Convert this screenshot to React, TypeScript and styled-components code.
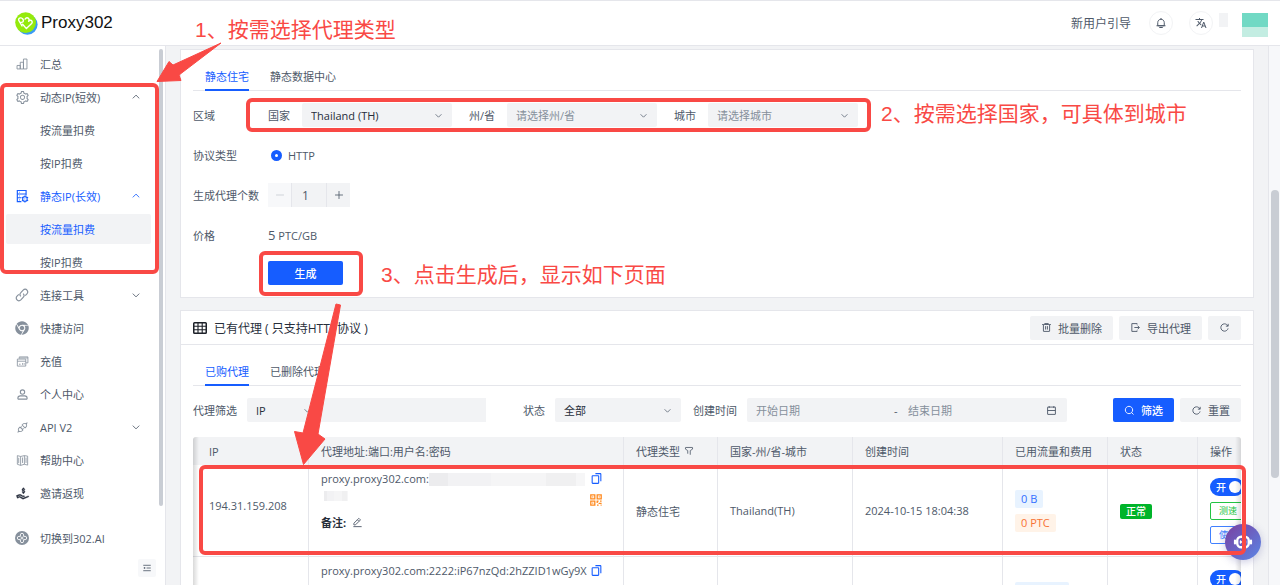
import React from "react";
import styled, { createGlobalStyle, css } from "styled-components";
import { AiOutlineApi, AiOutlineSetting } from "react-icons/ai";
import { FaChrome } from "react-icons/fa";
import { MdTranslate } from "react-icons/md";
import { LiaHandHoldingUsdSolid } from "react-icons/lia";

const blue = "#165dff";
const red = "#f94945";
const fill = "#f2f3f5";
const line = "#e5e6eb";

const GlobalStyle = createGlobalStyle`
  *, *::before, *::after { box-sizing: border-box; }
  body { margin: 0; background: ${fill}; }
  body, button, input, select {
    font-family: "Open Sans", "Noto Sans CJK SC", sans-serif;
    font-size: 11px;
    color: #4e5969;
  }
  button, input, select { margin: 0; border: 0; outline: 0; }
  svg { display: block; flex: none; }
`;

/* ---------- icons ---------- */

const paths = {
  up: "M39.6 30.557 24.043 15 8.487 30.557",
  down: "M39.6 17.443 24.043 33 8.487 17.443",
  trash:
    "M5 11h5.5m0 0v29a1 1 0 0 0 1 1h25a1 1 0 0 0 1-1V11m-27 0H16m21.5 0H43m-5.5 0H32m-16 0V7h16v4m-16 0h16M20 18v15m8-15v15",
  exportIcon: "M33 32l8-8-8-8M19 24h21M31 11V7H8v34h23v-4",
  refresh:
    "M38.837 18C36.463 12.136 30.715 8 24 8 15.163 8 8 15.163 8 24s7.163 16 16 16c7.455 0 13.72-5.1 15.496-12M40 8v10H30",
  search:
    "M33.072 33.071c6.248-6.248 6.248-16.379 0-22.627-6.249-6.249-16.38-6.249-22.628 0-6.248 6.248-6.248 16.379 0 22.627 6.248 6.248 16.38 6.248 22.628 0Zm0 0 8.485 8.485",
  calendar:
    "M7 24h34M14 5v8m20-8v8M8 41h32a1 1 0 0 0 1-1V10a1 1 0 0 0-1-1H8a1 1 0 0 0-1 1v30a1 1 0 0 0 1 1Z",
  copy: "M20 6h18a2 2 0 0 1 2 2v26M8 16v24c0 1.105.891 2 1.996 2h20.007A1.99 1.99 0 0 0 32 40.008V15.997A1.997 1.997 0 0 0 30 14H10a2 2 0 0 0-2 2Z",
  filter:
    "M30 42V22.549a1 1 0 0 1 .463-.844l10.074-6.41A1 1 0 0 0 41 14.45V8a1 1 0 0 0-1-1H8a1 1 0 0 0-1 1v6.451a1 1 0 0 0 .463.844l10.074 6.41a1 1 0 0 1 .463.844V37",
  edit: "m30.48 19.038 5.733-5.734a1 1 0 0 0 0-1.414l-5.586-5.586a1 1 0 0 0-1.414 0l-5.734 5.734m7 7L15.763 33.754a1 1 0 0 1-.59.286l-6.048.708a1 1 0 0 1-1.113-1.069l.477-6.31a1 1 0 0 1 .29-.631l14.7-14.7m7 7-7-7M6 42h36",
  bell: "M24 9c7.18 0 13 5.82 13 13v13H11V22c0-7.18 5.82-13 13-13Zm0 0V4M6 35h36m-25 7h14",
  user: "M7 37c0-4.97 4.03-8 9-8h16c4.97 0 9 3.03 9 8v3a1 1 0 0 1-1 1H8a1 1 0 0 1-1-1v-3ZM32 15a8 8 0 1 1-16 0 8 8 0 0 1 16 0Z",
  fold: "M42 11H6M42 24H22M42 37H6M13.66 26.912l-4.82-3.118 4.82-3.118v6.236Z",
  bars: "M41 7H29v34h12V7ZM29 18H18v23h11V18ZM18 29H7v12h11V29Z",
  link: "M20 29c-4-4-4-9 0-13l8-9c4-4 10-4 13 0s4 9 0 13l-6 6M28 19c4 4 4 9 0 13l-8 9c-4 4-10 4-13 0s-4-9 0-13l6-6",
  plus: "M5 24h38M24 5v38",
  minus: "M5 24h38",
  book: "M17 9 5 6v32l12 4 14-4 12 3V8L31 6 17 9Zm0 0v33M31 6v32M10 14v20M24 13v20M37 13v20",
  cards:
    "M12 14V7h32v22h-7M5 15h31v26H5V15Zm0 8h31M11 34h6M24 30v6M30 30v6M14 11h30",
  serverGear:
    "M22 43H8V5h30v17M8 17h30M8 30h14M14 11h2M14 24h2M14 37h2M42 34a8 8 0 1 1-16 0 8 8 0 0 1 16 0ZM34 22v4M34 42v4M24 28l3 2M41 38l4 2M24 40l3-2M41 30l4-2M33 34h2",
};

type IconName = keyof typeof paths;

const Icon = ({ name, size = 11, weight = 4 }: { name: IconName; size?: number; weight?: number }) => (
  <svg width={size} height={size} viewBox="0 0 48 48" fill="none" stroke="currentColor" strokeWidth={weight} aria-hidden>
    <path d={paths[name]} />
  </svg>
);

const TableIcon = () => (
  <svg width="14" height="12" viewBox="0 0 14 12" fill="none" stroke="#1d2129" aria-hidden>
    <rect x="0.75" y="0.75" width="12.5" height="10.5" rx="0.8" strokeWidth="1.5" />
    <path d="M1 4.3h12M1 7.7h12M5 1v10M9.2 1v10" strokeWidth="1.1" />
  </svg>
);

const QrIcon = () => (
  <svg width="12" height="12" viewBox="0 0 12 12" fill="none" stroke="#ff8a1f" strokeWidth="1.3" aria-hidden>
    <path d="M.8.8h4v4h-4zM7.2.8h4v4h-4zM.8 7.2h4v4h-4z" />
    <path d="M2.3 2.8h1M8.7 2.8h1M2.3 9.2h1M6.6 7.2h2M10 7.2h1.6M7.2 7v2M8.6 9.4h3M7 11.2h1.6M10.6 11.2h1" />
  </svg>
);

const CloverIcon = () => (
  <svg width="14" height="14" viewBox="0 0 14 14" aria-hidden>
    <circle cx="7" cy="7" r="7" fill="#86909c" />
    <path
      d="M5.4 5.4V3.9a1.6 1.6 0 0 1 3.2 0v1.5h1.5a1.6 1.6 0 0 1 0 3.2H8.6v1.5a1.6 1.6 0 0 1-3.2 0V8.6H3.9a1.6 1.6 0 0 1 0-3.2ZM7 5.6v2.8M5.6 7h2.8"
      fill="none"
      stroke="#fff"
      strokeWidth=".9"
    />
  </svg>
);

const Logo = () => (
  <svg width="23" height="23" viewBox="0 0 23 23" fill="none" aria-hidden>
    <circle cx="12.4" cy="12.6" r="10.2" fill="#3a9bf5" />
    <circle cx="10.6" cy="10.6" r="10.4" fill="#94ea0c" />
    <path
      d="M7 14 3.800 8.400C3.200 7 4.300 5.700 5.900 5.900c1.500.2 2.700 1.600 2.500 3-.1.900-1 1.600-2.400 1.500M7.600 12.200 11.400 16.600 16.600 11.500c1.200-1.300.4-3-.9-3.200-.9-.1-1.600.3-2.100.9.900-1.300.5-2.700-.7-3.200-1.100-.4-2.200.1-2.800 1.100"
      stroke="#fff"
      strokeWidth="1.400"
      strokeLinecap="round"
      strokeLinejoin="round"
    />
  </svg>
);

const RobotIcon = () => (
  <svg width="20" height="20" viewBox="0 0 20 20" fill="none" stroke="#fff" aria-hidden>
    <rect x="4.200" y="4.700" width="11.600" height="10.600" rx="4" strokeWidth="2.400" />
    <path d="M2 8.500v3M18 8.500v3" strokeWidth="2.200" strokeLinecap="round" />
    <path d="M7.500 9v2M12.500 9v2M7.500 10h5" strokeWidth="1.400" strokeLinecap="round" />
  </svg>
);

/* ---------- shell ---------- */

const Page = styled.div`
  position: relative;
  display: flex;
  flex-direction: column;
  height: 100vh;
  overflow: hidden;
`;

const Header = styled.header`
  display: flex;
  align-items: center;
  justify-content: space-between;
  flex: none;
  height: 46px;
  padding: 0 12px 0 15px;
  background: #fff;
  border-top: 1px solid ${line};
  border-bottom: 1px solid ${line};
`;

const Brand = styled.a`
  display: flex;
  align-items: center;
  gap: 3px;
  font-family: "Liberation Sans", sans-serif;
  font-size: 17px;
  color: #111;
  text-decoration: none;
`;

const HeaderTools = styled.div`
  display: flex;
  align-items: center;
  gap: 16px;
`;

const GuideLink = styled.a`
  margin-right: 2px;
  font-size: 12px;
  color: #4e5969;
  text-decoration: none;
`;

const RoundButton = styled.button`
  display: grid;
  place-items: center;
  width: 24px;
  height: 24px;
  padding: 0;
  border: 1px solid ${fill};
  border-radius: 50%;
  background: #fff;
`;

const Account = styled.div`
  display: flex;
  align-items: flex-start;
  gap: 14px;
  margin-top: 4px;
  margin-left: -10px;
`;

const NameBlur = styled.span`
  width: 9px;
  height: 14px;
  background: ${fill};
`;

const Avatar = styled.span`
  width: 26px;
  height: 24px;
  background: linear-gradient(#71d9c4 0 14px, #c3ede2 14px);
`;

const Body = styled.div`
  display: flex;
  flex: 1;
  min-height: 0;
`;

const Sidebar = styled.aside`
  display: flex;
  flex: none;
  width: 166px;
  background: #fff;
  border-right: 1px solid ${line};
`;

const SideColumn = styled.div`
  display: flex;
  flex-direction: column;
  flex: 1;
  padding: 3px 3px 8px 6px;
`;

const Nav = styled.nav`
  display: flex;
  flex-direction: column;
  gap: 3px;
  margin-right: 5px;
`;

const NavLink = styled.a<{ $active?: boolean; $open?: boolean }>`
  display: grid;
  grid-template-columns: 14px 1fr 10px;
  column-gap: 11px;
  align-items: center;
  height: 30px;
  padding: 0 10px 0 9px;
  border-radius: 2px;
  color: ${(p) => (p.$active || p.$open ? blue : "#4e5969")};
  background: ${(p) => (p.$active ? fill : "transparent")};
  text-decoration: none;
  white-space: nowrap;
`;

const NavIcon = styled.span<{ $dark?: boolean; $active?: boolean }>`
  display: grid;
  place-items: center;
  color: ${(p) => (p.$active ? blue : p.$dark ? "#272e3b" : "#86909c")};
`;

const SwitchSite = styled.div`
  margin-top: 15px;
`;

const FoldButton = styled.button`
  display: grid;
  place-items: center;
  width: 18px;
  height: 18px;
  margin-top: auto;
  margin-left: auto;
  padding: 0;
  border-radius: 2px;
  background: #f7f8fa;
`;

const SideScroll = styled.div`
  width: 4px;
  height: 457px;
  margin: 3px 2px 0 0;
  border-radius: 2px;
  background: #c9cdd4;
`;

const Main = styled.main`
  display: flex;
  flex-direction: column;
  flex: 1;
  gap: 12px;
  min-width: 0;
  padding: 3px 14px 0;
  overflow: hidden;
`;

const PageScroll = styled.div`
  flex: none;
  width: 12px;
  padding: 144px 0 0 2px;
  border-left: 1px solid ${line};
  background: #f7f8fa;
`;

const PageThumb = styled.div`
  width: 8px;
  height: 288px;
  border-radius: 4px;
  background: #c9cdd4;
`;

/* ---------- cards ---------- */

const Card = styled.section`
  flex: none;
  padding: 0 12px;
  background: #fff;
  border: 1px solid ${line};
  &:first-child { padding-bottom: 12px; }
`;

const Tabs = styled.div`
  display: flex;
  gap: 21px;
  height: 41px;
  padding: 12px 12px 0;
  border-bottom: 1px solid ${line};
`;

const Tab = styled.button<{ $active?: boolean }>`
  height: 29px;
  padding: 0;
  background: none;
  color: ${(p) => (p.$active ? blue : "#4e5969")};
  border-bottom: 2px solid ${(p) => (p.$active ? blue : "transparent")};
`;

const FormRow = styled.div`
  display: flex;
  align-items: center;
  height: 24px;
  margin-top: 16px;
  &:first-of-type { margin-top: 12px; }
  &:last-of-type { margin-top: 14px; }
`;

const FormLabel = styled.label`
  flex: none;
  width: 75px;
  white-space: nowrap;
`;

const Form = styled.form`
  margin: 0;
`;

const InlineLabel = styled.label<{ $first?: boolean }>`
  padding: 0 12px 0 ${(p) => (p.$first ? 0 : 17)}px;
  white-space: nowrap;
`;

const SelectBox = styled.div<{ $width: number; $muted?: boolean }>`
  display: grid;
  grid-template-columns: 1fr 28px;
  align-items: center;
  flex: none;
  width: ${(p) => p.$width}px;
  height: 24px;
  border-radius: 2px;
  background: ${fill};
  color: #4e5969;
  select {
    grid-area: 1 / 1 / 2 / 3;
    height: 24px;
    padding: 0 24px 0 9px;
    appearance: none;
    background: transparent;
    color: ${(p) => (p.$muted ? "#86909c" : "#272e3b")};
  }
  svg { grid-area: 1 / 2; justify-self: center; pointer-events: none; }
`;

const Radio = styled.input`
  appearance: none;
  width: 11px;
  height: 11px;
  margin: 0 6px 0 3px;
  border: 4px solid ${blue};
  border-radius: 50%;
  background: #fff;
`;

const Stepper = styled.div`
  display: flex;
  gap: 1px;
  background: ${line};
`;

const StepButton = styled.button`
  display: grid;
  place-items: center;
  width: 23px;
  height: 24px;
  padding: 0;
  background: ${fill};
  &:disabled { background: #f7f8fa; color: #c9cdd4; }
`;

const StepInput = styled.input`
  width: 34px;
  height: 24px;
  padding: 0 0 0 10px;
  background: ${fill};
  font-size: 12px;
`;

const Price = styled.output`
  b { font-size: 13px; font-weight: 400; }
`;

const Button = styled.button<{ $primary?: boolean; $wide?: boolean }>`
  display: inline-flex;
  align-items: center;
  justify-content: center;
  gap: 6px;
  flex: none;
  height: 24px;
  padding: 0 11px;
  border-radius: 2px;
  white-space: nowrap;
  background: ${(p) => (p.$primary ? blue : fill)};
  ${(p) => p.$primary && css`color: #fff; font-weight: 500;`}
  ${(p) => p.$wide && css`width: 75px;`}
`;

const CardHead = styled.div`
  display: flex;
  align-items: center;
  gap: 6px;
  height: 34px;
  margin: 0 -12px;
  padding: 0 12px;
  border-bottom: 1px solid ${line};
`;

const CardTitle = styled.h2`
  display: flex;
  align-items: center;
  gap: 7px;
  margin: 0 auto 0 0;
  font-size: 12px;
  font-weight: 400;
  color: #272e3b;
`;

const Filters = styled.form`
  display: flex;
  align-items: center;
  margin: 12px 0 15px;
  white-space: nowrap;
`;

const FilterLabel = styled.label<{ $lead?: boolean }>`
  margin: 0 10px 0 ${(p) => (p.$lead ? 37 : 12)}px;
  &:first-child { margin-left: 0; }
`;

const Keyword = styled.input`
  width: 165px;
  height: 24px;
  background: ${fill};
`;

const DateRange = styled.div`
  display: grid;
  grid-template-columns: 1fr 14px 1fr 12px;
  align-items: center;
  width: 320px;
  height: 24px;
  padding: 0 9px;
  border-radius: 2px;
  background: ${fill};
  input { min-width: 0; padding: 0; background: none; }
  input::placeholder { color: #86909c; }
`;

const FilterActions = styled.div`
  display: flex;
  gap: 6px;
  margin-left: auto;
`;

/* ---------- table ---------- */

const TableFrame = styled.div`
  position: relative;
  overflow: hidden;
  border-radius: 3px 3px 0 0;
  &::before, &::after {
    content: "";
    position: absolute;
    top: 0;
    bottom: 0;
    width: 6px;
    pointer-events: none;
  }
  &::before { left: 0; background: linear-gradient(90deg, rgba(0, 0, 0, 0.15), transparent); }
  &::after { right: 0; background: linear-gradient(270deg, rgba(0, 0, 0, 0.12), transparent); }
`;

const DataTable = styled.table`
  width: calc(100% + 56px);
  table-layout: fixed;
  border-collapse: separate;
  border-spacing: 0;
  color: #4e5969;
  th, td {
    padding: 0 12px;
    border-right: 1px solid ${line};
    text-align: left;
    white-space: nowrap;
  }
  th { height: 28px; font-weight: 400; background: ${fill}; color: #4e5969; }
  td { height: 92px; border-bottom: 1px solid ${line}; color: #4e5969; }
  th:first-child, td:first-child { padding-left: 16px; }
`;

const IpCell = styled.td`
  && { padding-bottom: 10px; }
`;

const AddressCell = styled.td`
  vertical-align: top;
`;

const Address = styled.div`
  display: grid;
  grid-template-columns: 267px 16px;
  column-gap: 2px;
  padding-top: 6px;
  line-height: 16px;
`;

const AddressText = styled.div`
  display: flex;
  flex-wrap: wrap;
`;

const Mosaic = styled.span<{ $width: number }>`
  width: ${(p) => p.$width}px;
  height: ${(p) => (p.$width > 50 ? 13 : 10)}px;
  margin: 2px 0 ${(p) => (p.$width > 50 ? 1 : 4)}px ${(p) => (p.$width > 50 ? 0 : 3)}px;
  background: linear-gradient(90deg, #ececee 0 12%, #f2f2f4 12% 40%, #f5f5f6 40% 75%, #f0f0f1 75% 94%, #f6f6f7 94%);
`;

const AddressTools = styled.div`
  display: flex;
  flex-direction: column;
  align-items: flex-start;
  gap: 9px;
  padding-top: 1px;
  color: ${blue};
`;

const IconButton = styled.button`
  padding: 0;
  background: none;
  color: inherit;
`;

const Remark = styled.div`
  display: flex;
  align-items: center;
  gap: 6px;
  margin-top: 8px;
  strong { font-weight: 700; color: #272e3b; }
`;

const HeadFlex = styled.span`
  display: flex;
  align-items: center;
  gap: 4px;
`;

const TagStack = styled.div`
  display: flex;
  flex-direction: column;
  align-items: flex-start;
  gap: 6px;
`;

const Tag = styled.span<{ $orange?: boolean }>`
  padding: 0 6px;
  border-radius: 2px;
  line-height: 18px;
  color: ${(p) => (p.$orange ? "#f77234" : "#3370ff")};
  background: ${(p) => (p.$orange ? "#fff3e8" : "#e8f3ff")};
`;

const StatusTag = styled.span`
  display: inline-block;
  padding: 0 6px;
  border-radius: 2px;
  background: #00b42a;
  color: #fff;
  font-size: 10px;
  font-weight: 500;
  line-height: 15px;
`;

const Ops = styled.div`
  display: flex;
  flex-direction: column;
  gap: 6px;
`;

const Toggle = styled.button`
  display: flex;
  align-items: center;
  justify-content: space-between;
  width: 34px;
  height: 18px;
  padding: 0 3px 0 6px;
  border-radius: 9px;
  background: ${blue};
  color: #fff;
  font-size: 10px;
  font-weight: 500;
  &::after { content: ""; width: 12px; height: 12px; border-radius: 50%; background: #fff; }
`;

const OutlineButton = styled.button<{ $color: string }>`
  width: 44px;
  height: 18px;
  padding: 0 8px;
  text-align: left;
  font-size: 9px;
  border: 1px solid ${(p) => p.$color};
  border-radius: 2px;
  background: #fff;
  color: ${(p) => p.$color};
`;

const ChatButton = styled.button`
  position: absolute;
  right: 19px;
  bottom: 25px;
  display: grid;
  place-items: center;
  width: 36px;
  height: 36px;
  padding: 0;
  border-radius: 50%;
  background: linear-gradient(135deg, #7a3fa0, #5a86e6);
  box-shadow: 0 2px 8px rgba(80, 80, 160, 0.3);
`;

/* ---------- tutorial marks over the page ---------- */

const Marks = styled.div`
  position: absolute;
  inset: 0;
  pointer-events: none;
`;

const MarkBox = styled.div<{ $x: number; $y: number; $w: number; $h: number }>`
  position: absolute;
  left: ${(p) => p.$x}px;
  top: ${(p) => p.$y}px;
  width: ${(p) => p.$w}px;
  height: ${(p) => p.$h}px;
  border: 4px solid ${red};
  border-radius: 6px;
`;

const MarkText = styled.p<{ $x: number; $y: number }>`
  position: absolute;
  left: ${(p) => p.$x}px;
  top: ${(p) => p.$y}px;
  margin: 0;
  font-family: "Liberation Sans", "Noto Sans CJK SC", sans-serif;
  font-size: 21px;
  line-height: 30px;
  white-space: nowrap;
  color: ${red};
`;

const Arrows = styled.svg`
  position: absolute;
  left: 0;
  top: 0;
`;

/* ---------- data ---------- */

type NavItem = {
  label: string;
  icon?: React.ReactNode;
  arrow?: "up" | "down";
  active?: boolean;
  open?: boolean;
  dark?: boolean;
};

const navItems: NavItem[] = [
  { label: "汇总", icon: <Icon name="bars" size={14} weight={3} /> },
  { label: "动态IP(短效)", icon: <AiOutlineSetting size={15} />, arrow: "up" },
  { label: "按流量扣费" },
  { label: "按IP扣费" },
  { label: "静态IP(长效)", icon: <Icon name="serverGear" size={14} />, arrow: "up", open: true },
  { label: "按流量扣费", active: true },
  { label: "按IP扣费" },
  { label: "连接工具", icon: <Icon name="link" size={14} /> , arrow: "down" },
  { label: "快捷访问", icon: <FaChrome size={14} /> },
  { label: "充值", icon: <Icon name="cards" size={13} weight={3} /> },
  { label: "个人中心", icon: <Icon name="user" size={13} /> },
  { label: "API V2", icon: <AiOutlineApi size={13} />, arrow: "down" },
  { label: "帮助中心", icon: <Icon name="book" size={13} weight={3} /> },
  {
    label: "邀请返现",
    icon: <LiaHandHoldingUsdSolid size={15} stroke="currentColor" strokeWidth={1} />,
    dark: true,
  },
];

const NavEntry = ({ item }: { item: NavItem }) => (
  <NavLink href="#" $active={item.active} $open={item.open}>
    <NavIcon $dark={item.dark} $active={item.open}>{item.icon}</NavIcon>
    <span>{item.label}</span>
    {item.arrow && <Icon name={item.arrow} size={10} />}
  </NavLink>
);

type SelectProps = { id: string; text: string; width: number; muted?: boolean };

const Select = ({ id, text, width, muted }: SelectProps) => (
  <SelectBox $width={width} $muted={muted}>
    <select id={id}>
      <option>{text}</option>
    </select>
    <Icon name="down" size={9} />
  </SelectBox>
);

const Operations = () => (
  <Ops>
    <Toggle type="button" role="switch" aria-checked="true">开</Toggle>
    <OutlineButton type="button" $color="#23c343">测速</OutlineButton>
    <OutlineButton type="button" $color="#4080ff">使用</OutlineButton>
  </Ops>
);

const CopyTools = () => (
  <AddressTools>
    <IconButton type="button" aria-label="复制"><Icon name="copy" size={13} /></IconButton>
    <IconButton type="button" aria-label="二维码"><QrIcon /></IconButton>
  </AddressTools>
);

export default function App() {
  return (
    <Page>
      <GlobalStyle />
      <Header>
        <Brand href="#"><Logo />Proxy302</Brand>
        <HeaderTools>
          <GuideLink href="#">新用户引导</GuideLink>
          <RoundButton type="button" aria-label="通知"><Icon name="bell" size={12} /></RoundButton>
          <RoundButton type="button" aria-label="语言"><MdTranslate size={12} /></RoundButton>
          <Account><NameBlur /><Avatar /></Account>
        </HeaderTools>
      </Header>
      <Body>
        <Sidebar>
          <SideColumn>
            <Nav>{navItems.map((item, i) => <NavEntry key={i} item={item} />)}</Nav>
            <SwitchSite><NavEntry item={{ label: "切换到302.AI", icon: <CloverIcon /> }} /></SwitchSite>
            <FoldButton type="button" aria-label="收起"><Icon name="fold" size={10} /></FoldButton>
          </SideColumn>
          <SideScroll />
        </Sidebar>
        <Main>
          <Card>
            <Tabs>
              <Tab type="button" $active>静态住宅</Tab>
              <Tab type="button">静态数据中心</Tab>
            </Tabs>
            <Form>
              <FormRow>
                <FormLabel as="span">区域</FormLabel>
                <InlineLabel htmlFor="country" $first>国家</InlineLabel>
                <Select id="country" text="Thailand (TH)" width={150} />
                <InlineLabel htmlFor="state">州/省</InlineLabel>
                <Select id="state" text="请选择州/省" width={150} muted />
                <InlineLabel htmlFor="city">城市</InlineLabel>
                <Select id="city" text="请选择城市" width={150} muted />
              </FormRow>
              <FormRow>
                <FormLabel as="span">协议类型</FormLabel>
                <Radio id="http" type="radio" name="protocol" defaultChecked />
                <label htmlFor="http">HTTP</label>
              </FormRow>
              <FormRow>
                <FormLabel htmlFor="count">生成代理个数</FormLabel>
                <Stepper>
                  <StepButton type="button" disabled aria-label="减少"><Icon name="minus" size={10} /></StepButton>
                  <StepInput id="count" defaultValue="1" />
                  <StepButton type="button" aria-label="增加"><Icon name="plus" size={10} /></StepButton>
                </Stepper>
              </FormRow>
              <FormRow>
                <FormLabel htmlFor="price">价格</FormLabel>
                <Price id="price"><b>5</b> PTC/GB</Price>
              </FormRow>
              <FormRow>
                <FormLabel as="span" />
                <Button type="button" $primary $wide>生成</Button>
              </FormRow>
            </Form>
          </Card>
          <Card>
            <CardHead>
              <CardTitle><TableIcon />已有代理 ( 只支持HTTP协议 )</CardTitle>
              <Button type="button"><Icon name="trash" />批量删除</Button>
              <Button type="button"><Icon name="exportIcon" />导出代理</Button>
              <Button type="button" aria-label="刷新"><Icon name="refresh" /></Button>
            </CardHead>
            <Tabs>
              <Tab type="button" $active>已购代理</Tab>
              <Tab type="button">已删除代理</Tab>
            </Tabs>
            <Filters>
              <FilterLabel htmlFor="field">代理筛选</FilterLabel>
              <Select id="field" text="IP" width={74} />
              <Keyword aria-label="关键字" />
              <FilterLabel htmlFor="status" $lead>状态</FilterLabel>
              <Select id="status" text="全部" width={126} />
              <FilterLabel htmlFor="from">创建时间</FilterLabel>
              <DateRange>
                <input id="from" placeholder="开始日期" />
                <span>-</span>
                <input aria-label="结束日期" placeholder="结束日期" />
                <Icon name="calendar" />
              </DateRange>
              <FilterActions>
                <Button type="button" $primary><Icon name="search" />筛选</Button>
                <Button type="button"><Icon name="refresh" />重置</Button>
              </FilterActions>
            </Filters>
            <TableFrame>
              <DataTable>
                <colgroup>
                  <col width="116" />
                  <col width="315" />
                  <col width="94" />
                  <col width="135" />
                  <col width="150" />
                  <col width="105" />
                  <col width="90" />
                  <col />
                </colgroup>
                <thead>
                  <tr>
                    <th>IP</th>
                    <th>代理地址:端口:用户名:密码</th>
                    <th><HeadFlex>代理类型 <Icon name="filter" size={10} /></HeadFlex></th>
                    <th>国家-州/省-城市</th>
                    <th>创建时间</th>
                    <th>已用流量和费用</th>
                    <th>状态</th>
                    <th>操作</th>
                  </tr>
                </thead>
                <tbody>
                  <tr>
                    <IpCell>194.31.159.208</IpCell>
                    <AddressCell>
                      <Address>
                        <AddressText>
                          proxy.proxy302.com:<Mosaic $width={156} />
                          <Mosaic $width={24} />
                        </AddressText>
                        <CopyTools />
                      </Address>
                      <Remark>
                        <strong>备注:</strong>
                        <IconButton type="button" aria-label="编辑"><Icon name="edit" /></IconButton>
                      </Remark>
                    </AddressCell>
                    <td>静态住宅</td>
                    <td>Thailand(TH)</td>
                    <td>2024-10-15 18:04:38</td>
                    <td><TagStack><Tag>0 B</Tag><Tag $orange>0 PTC</Tag></TagStack></td>
                    <td><StatusTag>正常</StatusTag></td>
                    <td><Operations /></td>
                  </tr>
                  <tr>
                    <td />
                    <AddressCell>
                      <Address>
                        <AddressText>
                          <span>proxy.proxy302.com:2222:iP67nzQd:2hZZID1wGy9X</span>
                          <span>HUZ5</span>
                        </AddressText>
                        <CopyTools />
                      </Address>
                    </AddressCell>
                    <td />
                    <td />
                    <td />
                    <td><TagStack><Tag>1.21 MB</Tag><Tag $orange>0 PTC</Tag></TagStack></td>
                    <td />
                    <td><Operations /></td>
                  </tr>
                </tbody>
              </DataTable>
            </TableFrame>
          </Card>
        </Main>
        <PageScroll><PageThumb /></PageScroll>
      </Body>
      <ChatButton type="button" aria-label="客服"><RobotIcon /></ChatButton>
      <Marks>
        <MarkBox $x={0} $y={83} $w={159} $h={191} />
        <MarkBox $x={246} $y={98} $w={625} $h={34} />
        <MarkBox $x={259} $y={251} $w={104} $h={45} />
        <MarkBox $x={199} $y={465} $w={1047} $h={90} />
        <Arrows width="400" height="480" fill={red} stroke={red} strokeLinejoin="round" aria-hidden>
          <path d="M221 43 173 65 169 61.500 157 81.500 181 80.500 179 75Z" />
          <path d="M336 304 303 433 294.500 431.500 303.500 464.500 325 439 318 434 340.500 305Z" />
        </Arrows>
        <MarkText $x={195} $y={15}>1、按需选择代理类型</MarkText>
        <MarkText $x={881} $y={99}>2、按需选择国家，可具体到城市</MarkText>
        <MarkText $x={381} $y={260}>3、点击生成后，显示如下页面</MarkText>
      </Marks>
    </Page>
  );
}
